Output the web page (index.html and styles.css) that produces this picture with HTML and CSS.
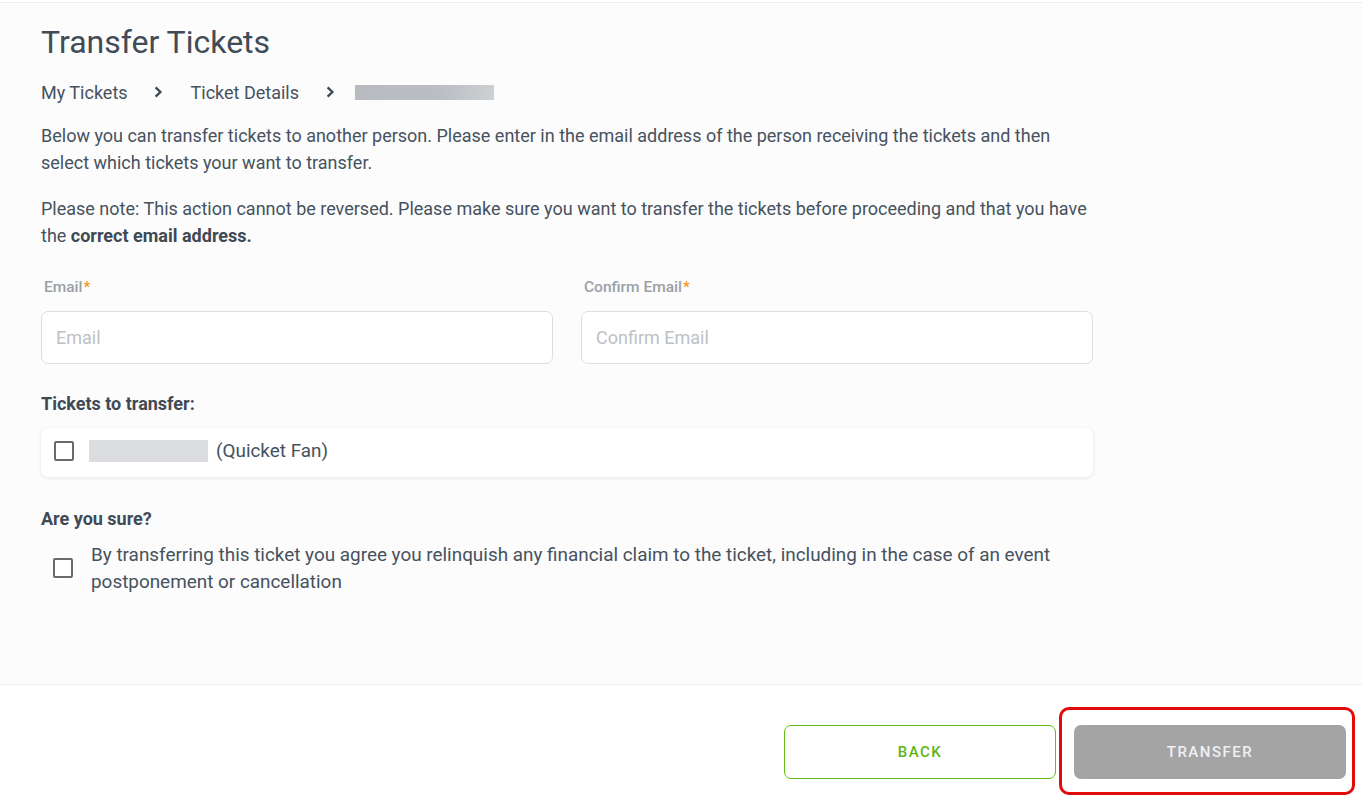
FILE: index.html
```html
<!DOCTYPE html>
<html>
<head>
<meta charset="utf-8">
<link rel="stylesheet" href="styles.css">
</head>
<body>
<div class="page">
  <main class="content">
    <h1 class="title">Transfer Tickets</h1>
    <nav class="crumbs">
      <span class="crumb">My Tickets</span>
      <svg class="chev" viewBox="0 0 9 12" width="9" height="12"><path d="M1.6 1.4 L6.4 6 L1.6 10.6" fill="none" stroke="#3d4852" stroke-width="2.3"/></svg>
      <span class="crumb">Ticket Details</span>
      <svg class="chev" viewBox="0 0 9 12" width="9" height="12"><path d="M1.6 1.4 L6.4 6 L1.6 10.6" fill="none" stroke="#3d4852" stroke-width="2.3"/></svg>
      <span class="redact crumb-redact"></span>
    </nav>
    <p class="text">Below you can transfer tickets to another person. Please enter in the email address of the person receiving the tickets and then select which tickets your want to transfer.</p>
    <p class="text">Please note: This action cannot be reversed. Please make sure you want to transfer the tickets before proceeding and that you have the <b>correct email address.</b></p>

    <div class="fields">
      <div class="field">
        <label class="label">Email<span class="req">*</span></label>
        <input class="input" type="text" placeholder="Email">
      </div>
      <div class="field">
        <label class="label">Confirm Email<span class="req">*</span></label>
        <input class="input" type="text" placeholder="Confirm Email">
      </div>
    </div>

    <h3 class="subhead">Tickets to transfer:</h3>
    <div class="ticket">
      <span class="box"></span>
      <span class="redact ticket-redact"></span>
      <span class="ticket-name">(Quicket Fan)</span>
    </div>

    <h3 class="subhead sure">Are you sure?</h3>
    <div class="agree">
      <span class="box"></span>
      <span class="agree-text">By transferring this ticket you agree you relinquish any financial claim to the ticket, including in the case of an event postponement or cancellation</span>
    </div>
  </main>
  <footer class="footer">
    <button class="btn btn-back">BACK</button>
    <div class="highlight-wrap">
      <button class="btn btn-transfer">TRANSFER</button>
      <span class="highlight"></span>
    </div>
  </footer>
</div>
</body>
</html>
```
FILE: styles.css
```css
* { box-sizing: border-box; }
html, body { margin: 0; padding: 0; }
body {
  background: #ffffff;
  font-family: Roboto, "Liberation Sans", Arial, sans-serif;
  color: #46525e;
}
.page {
  width: 1362px;
  height: 804px;
  display: flex;
  flex-direction: column;
  border-top: 2px solid #ffffff;
}
.content {
  background: #fcfcfc;
  border-top: 1px solid #ececec;
  border-bottom: 1px solid #ededed;
  padding: 19px 0 0 41px;
  height: 683px;
}
.title {
  margin: 0;
  font-size: 32px;
  font-weight: 400;
  line-height: 40px;
  color: #404b56;
}
.crumbs {
  display: flex;
  align-items: center;
  margin-top: 18px;
  height: 24px;
  font-size: 18px;
  color: #46525e;
}
.chev { flex: none; margin: 0 28px 0 26px; }
.crumbs .chev:nth-of-type(2) { margin-left: 27px; margin-right: 20px; }
.redact {
  display: inline-block;
  background: linear-gradient(90deg, #b8bcc1 0%, #babec2 60%, #cdd0d3 100%);
}
.crumb-redact { width: 139px; height: 15px; }
.text {
  margin: 18px 0 0;
  width: 1060px;
  font-size: 18px;
  line-height: 27px;
}
.text + .text { margin-top: 19px; }
.text b { font-weight: 700; color: #3e4954; }
.fields {
  display: flex;
  gap: 28px;
  width: 1052px;
  margin-top: 28px;
}
.field { flex: 1; display: flex; flex-direction: column; }
.label {
  font-size: 15.5px;
  font-weight: 500;
  color: #9ba0a6;
  line-height: 20px;
  padding-left: 3px;
}
.req { color: #f7941d; margin-left: 1px; }
.input {
  margin-top: 14px;
  height: 53px;
  border: 1px solid #dcdee1;
  border-radius: 7px;
  background: #ffffff;
  padding: 0 14px;
  font-family: inherit;
  font-size: 18px;
  color: #46525e;
  outline: none;
}
.input::placeholder { color: #bdc1c5; }
.subhead {
  margin: 28px 0 0;
  font-size: 18px;
  font-weight: 700;
  line-height: 24px;
  color: #3f4a55;
}
.ticket {
  margin-top: 12px;
  width: 1052px;
  height: 49px;
  background: #ffffff;
  border-radius: 7px;
  box-shadow: 0 1px 4px rgba(0,0,0,0.09);
  display: flex;
  align-items: center;
  padding: 0 0 4px 13px;
}
.box {
  flex: none;
  width: 20px;
  height: 20px;
  border: 2px solid #676b70;
  border-radius: 2px;
  background: #fff;
}
.ticket-redact { margin-left: 15px; width: 119px; height: 22px; background: #dcdde0; }
.ticket-name { margin-left: 8px; font-size: 18.9px; }
.sure { margin-top: 30px; }
.agree {
  display: flex;
  align-items: center;
  margin-top: 10px;
  padding-left: 12px;
  width: 1052px;
}
.agree-text {
  margin-left: 18px;
  font-size: 18.9px;
  line-height: 27px;
}
.footer {
  flex: 1;
  background: #ffffff;
  display: flex;
  justify-content: flex-end;
  align-items: flex-start;
  gap: 18px;
  padding: 40px 16px 0 0;
}
.btn {
  width: 272px;
  height: 54px;
  border-radius: 7px;
  font-family: inherit;
  font-size: 15px;
  font-weight: 500;
  letter-spacing: 1.5px;
}
.btn-back {
  background: #ffffff;
  border: 1px solid #62bb16;
  color: #5db514;
}
.highlight-wrap { position: relative; }
.btn-transfer {
  background: #a4a4a4;
  border: none;
  color: #eef0f2;
  display: block;
}
.highlight {
  position: absolute;
  left: -15px;
  top: -18px;
  width: 296px;
  height: 88px;
  border: 3px solid #e20a0a;
  border-radius: 10px;
  pointer-events: none;
}
```
